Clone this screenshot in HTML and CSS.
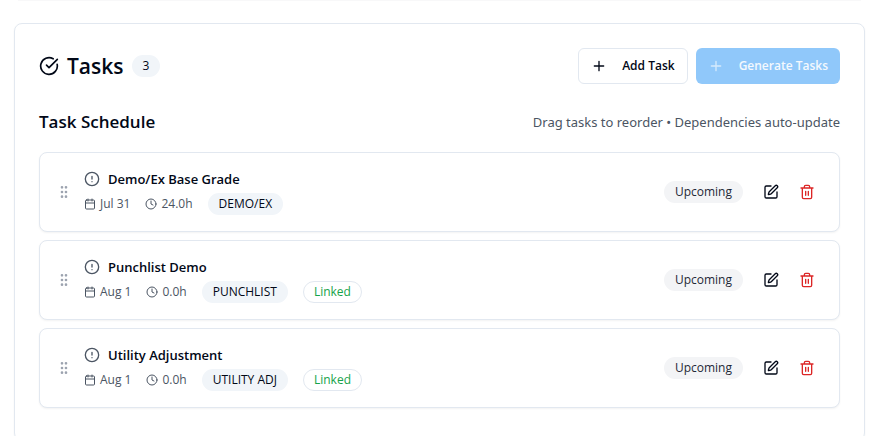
FILE: index.html
```
<!DOCTYPE html>
<html lang="en">
<head>
<meta charset="utf-8">
<title>Tasks</title>
<link rel="stylesheet" href="styles.css">
</head>
<body>
<svg class="sprite" aria-hidden="true">
  <symbol id="check" viewBox="0 0 24 24"><path d="M21.801 10A10 10 0 1 1 17 3.335"/><path d="m9 11 3 3L22 4"/></symbol>
  <symbol id="plus" viewBox="0 0 24 24"><path d="M5 12h14M12 5v14"/></symbol>
  <symbol id="grip" viewBox="0 0 24 24"><circle cx="9" cy="12" r="1"/><circle cx="9" cy="5" r="1"/><circle cx="9" cy="19" r="1"/><circle cx="15" cy="12" r="1"/><circle cx="15" cy="5" r="1"/><circle cx="15" cy="19" r="1"/></symbol>
  <symbol id="alert" viewBox="0 0 24 24"><circle cx="12" cy="12" r="10"/><path d="M12 8v4M12 16h.01"/></symbol>
  <symbol id="calendar" viewBox="0 0 24 24"><path d="M8 2v4M16 2v4"/><rect width="18" height="18" x="3" y="4" rx="2"/><path d="M3 10h18"/></symbol>
  <symbol id="clock" viewBox="0 0 24 24"><circle cx="12" cy="12" r="10"/><path d="M12 6v6l4 2"/></symbol>
  <symbol id="edit" viewBox="0 0 24 24"><path d="M12 3H5a2 2 0 0 0-2 2v14a2 2 0 0 0 2 2h14a2 2 0 0 0 2-2v-7"/><path d="M18.375 2.625a1 1 0 0 1 3 3l-9.013 9.014a2 2 0 0 1-.853.505l-2.873.84a.5.5 0 0 1-.62-.62l.84-2.873a2 2 0 0 1 .506-.852z"/></symbol>
  <symbol id="trash" viewBox="0 0 24 24"><path d="M3 6h18M19 6v14c0 1-1 2-2 2H7c-1 0-2-1-2-2V6M8 6V4c0-1 1-2 2-2h4c1 0 2 1 2 2v2M10 11v6M14 11v6"/></symbol>
</svg>
<div class="previous-card"></div>
<main class="panel">
  <header class="panel-header">
    <h1 class="panel-title"><svg class="icon icon-lg"><use href="#check"/></svg>Tasks <span class="badge">3</span></h1>
    <div class="toolbar">
      <button class="button button-outline" type="button"><svg class="icon"><use href="#plus"/></svg>Add Task</button>
      <button class="button button-primary" type="button" disabled><svg class="icon"><use href="#plus"/></svg>Generate Tasks</button>
    </div>
  </header>
  <div class="schedule-header">
    <h2 class="schedule-title">Task Schedule</h2>
    <p class="hint">Drag tasks to reorder • Dependencies auto-update</p>
  </div>
  <ul class="task-list">
    <li class="task">
      <svg class="icon grip"><use href="#grip"/></svg>
      <div class="task-body">
        <h3 class="task-name"><svg class="icon"><use href="#alert"/></svg>Demo/Ex Base Grade</h3>
        <div class="meta">
          <span class="meta-item"><svg class="icon icon-sm"><use href="#calendar"/></svg>Jul 31</span>
          <span class="meta-item"><svg class="icon icon-sm"><use href="#clock"/></svg>24.0h</span>
          <span class="badge">DEMO/EX</span>
        </div>
      </div>
      <span class="badge status">Upcoming</span>
      <div class="actions">
        <button class="icon-button" type="button" aria-label="Edit"><svg class="icon"><use href="#edit"/></svg></button>
        <button class="icon-button danger" type="button" aria-label="Delete"><svg class="icon"><use href="#trash"/></svg></button>
      </div>
    </li>
    <li class="task">
      <svg class="icon grip"><use href="#grip"/></svg>
      <div class="task-body">
        <h3 class="task-name"><svg class="icon"><use href="#alert"/></svg>Punchlist Demo</h3>
        <div class="meta">
          <span class="meta-item"><svg class="icon icon-sm"><use href="#calendar"/></svg>Aug 1</span>
          <span class="meta-item"><svg class="icon icon-sm"><use href="#clock"/></svg>0.0h</span>
          <span class="badge">PUNCHLIST</span>
          <span class="badge linked">Linked</span>
        </div>
      </div>
      <span class="badge status">Upcoming</span>
      <div class="actions">
        <button class="icon-button" type="button" aria-label="Edit"><svg class="icon"><use href="#edit"/></svg></button>
        <button class="icon-button danger" type="button" aria-label="Delete"><svg class="icon"><use href="#trash"/></svg></button>
      </div>
    </li>
    <li class="task">
      <svg class="icon grip"><use href="#grip"/></svg>
      <div class="task-body">
        <h3 class="task-name"><svg class="icon"><use href="#alert"/></svg>Utility Adjustment</h3>
        <div class="meta">
          <span class="meta-item"><svg class="icon icon-sm"><use href="#calendar"/></svg>Aug 1</span>
          <span class="meta-item"><svg class="icon icon-sm"><use href="#clock"/></svg>0.0h</span>
          <span class="badge">UTILITY ADJ</span>
          <span class="badge linked">Linked</span>
        </div>
      </div>
      <span class="badge status">Upcoming</span>
      <div class="actions">
        <button class="icon-button" type="button" aria-label="Edit"><svg class="icon"><use href="#edit"/></svg></button>
        <button class="icon-button danger" type="button" aria-label="Delete"><svg class="icon"><use href="#trash"/></svg></button>
      </div>
    </li>
  </ul>
</main>
</body>
</html>
```
FILE: styles.css
```
* { box-sizing: border-box; }
body {
  margin: 0;
  padding: 0 21px 0 14px;
  background: #fff;
  color: #020817;
  font-family: "Open Sans", "Noto Sans", sans-serif;
  font-size: 13px;
  line-height: 20px;
  overflow: hidden;
}
h1, h2, h3, p, ul { margin: 0; padding: 0; }
.sprite { display: none; }
.icon {
  width: 16px;
  height: 16px;
  flex: none;
  fill: none;
  stroke: currentColor;
  stroke-width: 2;
  stroke-linecap: round;
  stroke-linejoin: round;
}
.icon-lg { width: 20px; height: 20px; }
.icon-sm { width: 12px; height: 12px; }
.previous-card {
  height: 1px;
  margin: 0 4px 22px;
  background: #f8f8f9;
}
.panel {
  padding: 24px 24px 32px;
  border: 1px solid #e2e8f0;
  border-radius: 8px;
  box-shadow: 0 1px 2px rgba(0, 0, 0, 0.05);
}
.panel-header, .schedule-header {
  display: flex;
  align-items: center;
  justify-content: space-between;
}
.panel-title {
  display: flex;
  align-items: center;
  gap: 8px;
  font-size: 21px;
  font-weight: 600;
  line-height: 32px;
}
.toolbar { display: flex; gap: 8px; }
.button {
  display: flex;
  align-items: center;
  justify-content: space-between;
  gap: 15px;
  height: 36px;
  padding: 0 12px;
  border: 0;
  border-radius: 6px;
  font: inherit;
  font-size: 12px;
  font-weight: 600;
  white-space: nowrap;
}
.button-outline {
  border: 1px solid #e2e8f0;
  background: #fff;
  color: #020817;
}
.button-primary { background: #90c8fa; color: #f4f9fe; }
.button-primary .icon { color: #d5eafd; }
.schedule-header { margin: 24px 0 16px; }
.schedule-title { font-size: 17px; font-weight: 600; line-height: 28px; }
.hint { color: #4b5563; font-family: "Noto Sans", sans-serif; }
.task-list { display: grid; gap: 8px; list-style: none; }
.task {
  display: flex;
  align-items: center;
  gap: 12px;
  padding: 16px;
  border: 1px solid #e2e8f0;
  border-radius: 8px;
  background: #fff;
  box-shadow: 0 1px 2px rgba(0, 0, 0, 0.05);
}
.grip { color: #9ca3af; }
.task-body { flex: 1; display: grid; gap: 4px; }
.task-name {
  display: flex;
  align-items: center;
  gap: 8px;
  font-size: 13px;
  font-weight: 600;
}
.task-name .icon { color: #4b5563; }
.meta {
  display: flex;
  align-items: center;
  gap: 15px;
  color: #4b5563;
  font-size: 12px;
  line-height: 16px;
}
.meta-item { display: flex; align-items: center; gap: 4px; }
.badge {
  padding: 2px 10px;
  border: 1px solid transparent;
  border-radius: 11px;
  background: #f1f5f9;
  color: #020817;
  font-size: 12px;
  font-weight: 500;
  line-height: 16px;
}
.status { background: #f3f4f6; color: #1f2937; }
.linked { border-color: #e2e8f0; background: #fff; color: #16a34a; }
.actions { display: flex; gap: 4px; }
.icon-button {
  display: flex;
  align-items: center;
  justify-content: center;
  width: 32px;
  height: 32px;
  padding: 0;
  border: 0;
  background: none;
  color: #020817;
}
.danger { color: #dc2626; }
```
